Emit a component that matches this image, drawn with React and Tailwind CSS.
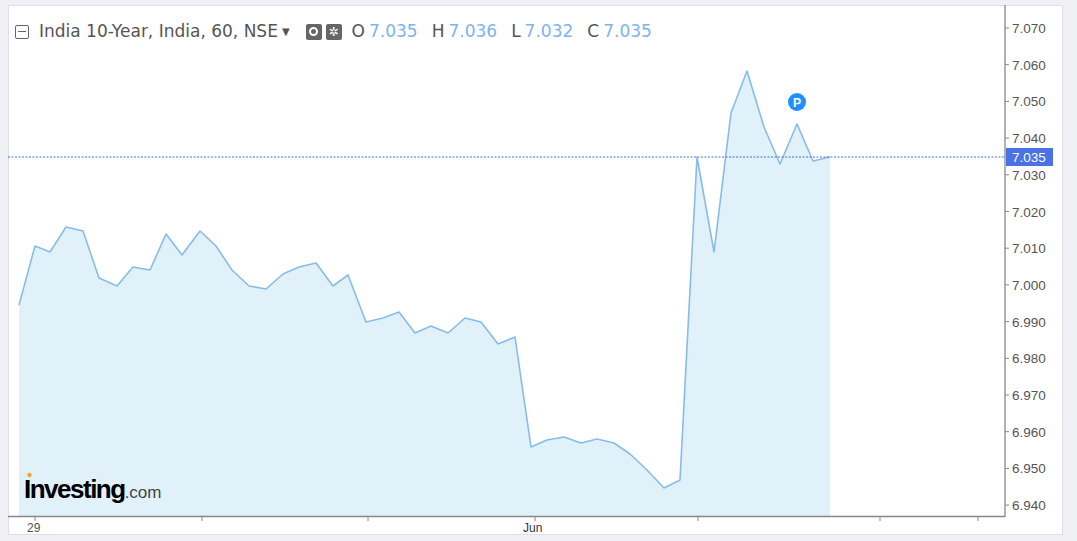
import React from "react";

const pts = [[19,305],[35,246],[50,252],[66,227],[83,231],[99,278],[117,286],[133,267],[150,270],[166,234],[182,255],[200,231],[216,246],[232,270],[249,286],[266,289],[283,274],[299,267],[316,263],[333,286],[348,275],[366,322],[383,318],[399,312],[415,333],[431,326],[448,333],[465,318],[481,322],[498,344],[515,337],[531,447],[547,440],[564,437],[581,443],[597,439],[614,443],[630,454],[647,470],[664,488],[680,480],[697,157],[714,252],[731,113],[747,71],[764,127],[780,164],[797,124],[813,161],[830,157]];

export default function App() {
  const line = pts.map(p => p.join(",")).join(" ");
  const area = `19,516 ${line} 830,516`;
  const labels = ["7.070","7.060","7.050","7.040","7.030","7.020","7.010","7.000","6.990","6.980","6.970","6.960","6.950","6.940"];
  const yOf = i => 28 + i * 36.7;
  return (
    <div className="w-[1077px] h-[541px] bg-[#eef0f4] relative overflow-hidden" style={{fontFamily:"'Liberation Sans', Arial, sans-serif"}}>
      <div className="absolute left-[8px] top-[5px] w-[1055px] h-[530px] bg-white border border-[#dde0e6]" />
      <svg className="absolute left-0 top-0" width="1077" height="541">
        <polygon points={area} fill="#e1f1fa" />
        <polyline points={line} fill="none" stroke="#86bcec" strokeWidth="1.6" strokeLinejoin="round" />
        <line x1="8" y1="157" x2="1005" y2="157" stroke="#4a6fe0" strokeWidth="1" strokeDasharray="2 1.5" />
        <line x1="1005" y1="5" x2="1005" y2="517" stroke="#888" strokeWidth="1.3" />
        <line x1="8" y1="516.5" x2="1005" y2="516.5" stroke="#888" strokeWidth="1.3" />
        {labels.map((l,i)=>(
          <g key={l}>
            <line x1="1005" y1={yOf(i)} x2="1009" y2={yOf(i)} stroke="#888" />
            <text x="1012" y={yOf(i)+5} fontSize="13.5" fill="#555">{l}</text>
          </g>
        ))}
        <rect x="1006" y="148" width="47" height="18" fill="#4a72e3" />
        <text x="1012" y="162" fontSize="13.5" fill="#fff">7.035</text>
        {[35,202,368,535,698,880,978].map(x=>(
          <line key={x} x1={x} y1="516" x2={x} y2="521" stroke="#888" />
        ))}
        <text x="27" y="532" fontSize="12" fill="#555">29</text>
        <text x="523" y="532" fontSize="12" fill="#333">Jun</text>
        <circle cx="797" cy="102" r="9" fill="#1e90ff" />
        <text x="797" y="107" fontSize="12" fontWeight="bold" fill="#fff" textAnchor="middle">P</text>
        <circle cx="29.5" cy="475" r="2.2" fill="#f5a623" />
      </svg>
      <div className="absolute left-[15px] top-[19px] flex items-center gap-[4px] text-[17px] text-[#555]" style={{fontFamily:"'DejaVu Sans', sans-serif"}}>
        <span className="w-[14px] h-[14px] border border-[#666] rounded-[2px] flex items-center justify-center mr-[6px]"><span className="w-[8px] h-px bg-[#666]" /></span>
        <span>India 10-Year, India, 60, NSE</span>
        <span className="text-[10px] mr-[12px]">▼</span>
        <span className="w-[16px] h-[16px] bg-[#666] rounded-[2px] flex items-center justify-center"><span className="w-[9px] h-[9px] rounded-full border-2 border-white" /></span>
        <span className="w-[16px] h-[16px] bg-[#666] rounded-[2px] flex items-center justify-center text-white text-[12px] leading-none">✲</span>
        <span className="ml-[6px]">O</span><span className="text-[#7cb5ec] mr-[10px]">7.035</span>
        <span>H</span><span className="text-[#7cb5ec] mr-[10px]">7.036</span>
        <span>L</span><span className="text-[#7cb5ec] mr-[10px]">7.032</span>
        <span>C</span><span className="text-[#7cb5ec]">7.035</span>
      </div>
      <div className="absolute left-[24px] top-[470px] flex items-baseline" style={{fontFamily:"'Liberation Sans', Arial, sans-serif"}}>
        <span className="text-[26px] font-bold text-black tracking-[-1.5px]">Investing</span>
        <span className="text-[17px] text-[#444]">.com</span>
      </div>
    </div>
  );
}
